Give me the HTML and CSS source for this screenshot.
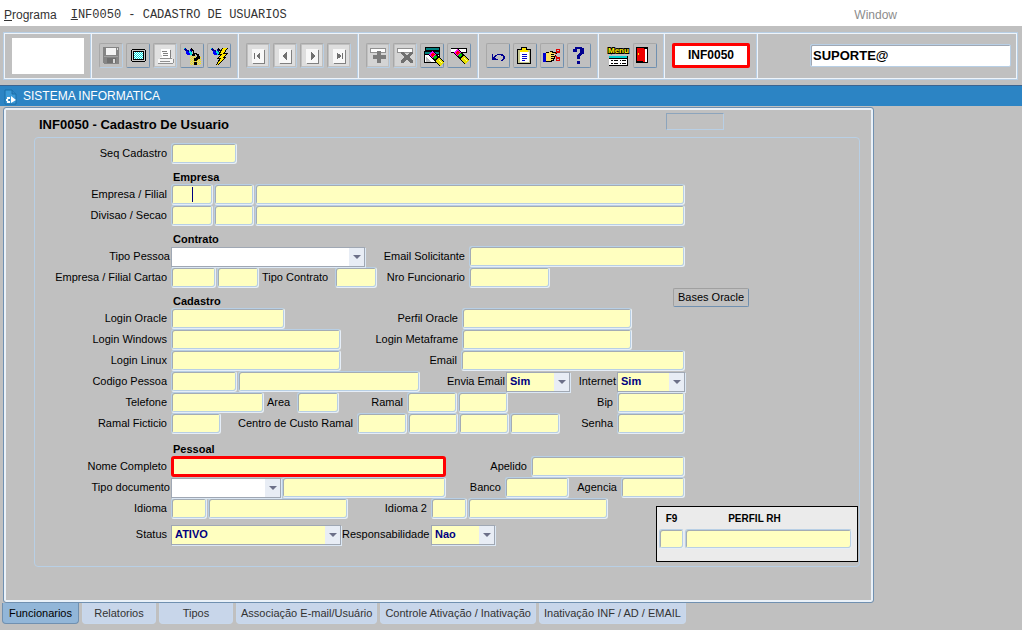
FILE: index.html
```html
<!DOCTYPE html>
<html lang="pt-BR">
<head>
<meta charset="utf-8">
<title>INF0050 - Cadastro de Usuarios</title>
<link rel="stylesheet" href="styles.css">
</head>
<body>
<svg class="defs" aria-hidden="true">
  <defs>
    <pattern id="dither" width="2" height="2" patternUnits="userSpaceOnUse"><rect width="2" height="2" fill="#fff"/><rect width="1" height="1" fill="#00e0e0"/><rect x="1" y="1" width="1" height="1" fill="#00e0e0"/></pattern>
    <pattern id="sand" width="2" height="2" patternUnits="userSpaceOnUse"><rect width="1" height="1" fill="#ffe600"/><rect x="1" y="1" width="1" height="1" fill="#ffe600"/></pattern>
    <g id="torch">
      <path d="M2 3h2v1h1v1h2v1h1v-2h2v4h-1v2h-3v-1h-1v-1h-1v-2h-1v-1h-1z" fill="#000090"/>
      <path d="M4 6h2v1h2v3h-3v-1h-1z" fill="#0000ff"/>
      <path d="M7 6h2v1h1v3h-2v-2h-1z" fill="#00e0e0"/>
      <path d="M9 3h1v1h1v1h1v3h-1v-2h-1v-1h-1z" fill="#000"/>
      <path d="M2 3h1v1h-1z" fill="#00e0e0"/>
    </g>
    <g id="page">
      <rect width="20" height="21" fill="#dedede"/>
      <rect x="5" y="5" width="12" height="14" fill="#808080"/>
      <rect x="4" y="4" width="12" height="14" fill="#f8f8f8"/>
    </g>
    <g id="brush" fill="none">
      <path d="M7 6l11 11" stroke="#000" stroke-width="6"/>
      <path d="M7 6l4 4" stroke="#f0f" stroke-width="5"/>
      <path d="M8 7l2 2" stroke="#f00" stroke-width="3"/>
      <path d="M10.500 9.500l2 2" stroke="#00c800" stroke-width="4"/>
      <path d="M13.500 12.500l5 5" stroke="#e8e000" stroke-width="5"/>
      <path d="M15 13l3 3" stroke="#ffff90" stroke-width="1"/>
    </g>
  </defs>
</svg>

<nav class="menubar">
  <button class="menu-item" type="button"><u>P</u>rograma</button>
  <button class="menu-item mono" type="button"><u>I</u>NF0050 - CADASTRO DE USUARIOS</button>
  <button class="menu-item window" type="button" disabled>Window</button>
</nav>

<header class="toolbar">
  <div class="group"><div class="logo"></div></div>
  <div class="group">
    <button class="tool off" type="button" aria-label="Salvar"><svg viewBox="0 0 20 21"><path d="M2 2h16v17h-15v-1h-1z" fill="#858585"/><path d="M5 3h10v7h-10z" fill="#f4f4f4"/><path d="M16 3h1v2h-1z" fill="#ddd"/><path d="M6 13h9v5h-9z" fill="#707070"/><path d="M12 14h2v4h-2z" fill="#d8d8d8"/><path d="M3 11h14v1h-14z" fill="#a0a0a0"/></svg></button>
    <button class="tool" type="button" aria-label="Tela"><svg viewBox="0 0 20 21"><path d="M4 4h13v1h1v11h-1v1h-13v-1h-1v-11h1z" fill="#000"/><path d="M4 5h13v11h-13z" fill="#c8c8c8"/><path d="M5 6h11v9h-11z" fill="#000"/><path d="M6 7h9v7h-9z" fill="url(#dither)"/></svg></button>
    <button class="tool off" type="button" aria-label="Imprimir"><svg viewBox="0 0 20 21"><path d="M0 0h20v21h-20z" fill="#e0e0e0"/><path d="M6 4h9v9h-8v-3h-1z" fill="#fff"/><path d="M15 5h1v8h-1zM7 6h5v1h-5zM8 8h5v1h-5zM8 10h5v1h-5z" fill="#808080"/><path d="M5 12h2v1h9v-1h1v2h1v4h-15v-4h2z" fill="#f6f6f6"/><path d="M5 13h12v1h-12zM3 18h15v1h-15zM18 14h1v4h-1zM5 16h10v1h-10z" fill="#909090"/></svg></button>
    <button class="tool" type="button" aria-label="Entrar consulta"><svg viewBox="0 0 20 21"><path d="M8 11h11v9h-11z" fill="url(#sand)"/><use href="#torch"/><path d="M11 8h4v1h2v2h1v3h-2v1h-1v1h-3v-3h2v-1h1v-2h-1v-1h-1v2h-3v-2h1zM12 17h3v3h-3z" fill="#000"/></svg></button>
    <button class="tool" type="button" aria-label="Executar consulta"><svg viewBox="0 0 20 21"><use href="#torch"/><path d="M13 3h6l-3 5h3l-4 4h2l-8 8h-2l3-6h-3l4-4h-2z" fill="#000"/><path d="M14 3h4l-4 6h4l-5 4h3l-8 7l4-7h-3l4-4h-2z" fill="#ffe600"/></svg></button>
  </div>
  <div class="group">
    <button class="tool off" type="button" aria-label="Primeiro"><svg viewBox="0 0 20 21"><use href="#page"/><path d="M6 8h1v6h-1zM12 8v6h-1v-1h-1v-1h-1v-2h1v-1h1v-1z" fill="#707070"/></svg></button>
    <button class="tool off" type="button" aria-label="Anterior"><svg viewBox="0 0 20 21"><use href="#page"/><path d="M12 7v8h-1v-1h-1v-1h-1v-1h-1v-2h1v-1h1v-1h1v-1z" fill="#707070"/></svg></button>
    <button class="tool off" type="button" aria-label="Proximo"><svg viewBox="0 0 20 21"><use href="#page"/><path d="M9 7v8h1v-1h1v-1h1v-1h1v-2h-1v-1h-1v-1h-1v-1z" fill="#707070"/></svg></button>
    <button class="tool off" type="button" aria-label="Ultimo"><svg viewBox="0 0 20 21"><use href="#page"/><path d="M13 8h1v6h-1zM8 8v6h1v-1h2v-1h1v-2h-1v-1h-2v-1z" fill="#707070"/></svg></button>
  </div>
  <div class="group">
    <button class="tool off" type="button" aria-label="Inserir"><svg viewBox="0 0 20 21"><path d="M0 0h20v21h-20z" fill="#d4d4d4"/><path d="M2 3h16v5h-16z" fill="#909090"/><path d="M3 4h14v3h-14z" fill="#fff"/><path d="M9 6h4v4h5v4h-5v4h-4v-4h-4v-4h4z" fill="#7c7c7c"/></svg></button>
    <button class="tool off" type="button" aria-label="Remover"><svg viewBox="0 0 20 21"><path d="M0 0h20v21h-20z" fill="#d4d4d4"/><path d="M2 3h16v5h-16z" fill="#909090"/><path d="M3 4h14v3h-14z" fill="#fff"/><path d="M6 7h3v1h1v1h1v1h2v-1h1v-1h1v-1h3v2h-1v1h-1v1h-1v2h1v1h1v1h1v3h-3v-1h-1v-1h-1v-1h-2v1h-1v1h-1v1h-3v-3h1v-1h1v-1h1v-2h-1v-1h-1v-1h-1z" fill="#707070"/></svg></button>
    <button class="tool" type="button" aria-label="Limpar bloco"><svg viewBox="0 0 20 21"><path d="M3 2h15v4h-15zM2 6h16v12h-16z" fill="#000"/><path d="M4 3h13v2h-13zM3 7h14v2h-14z" fill="#008080"/><path d="M3 10h14v7h-14z" fill="#fff"/><path d="M4 12l6 5h-6z" fill="#c0c0c0"/><use href="#brush" transform="translate(2 2)"/></svg></button>
    <button class="tool" type="button" aria-label="Limpar registro"><svg viewBox="0 0 20 21"><path d="M2 3h16v5h-16z" fill="#000"/><path d="M2 4h15v3h-15z" fill="#fff"/><use href="#brush"/></svg></button>
  </div>
  <div class="group">
    <button class="tool" type="button" aria-label="Desfazer"><svg viewBox="0 0 20 21"><path d="M4 9v6h6v-1h-2v-1h-1v-1h1v-1h1v-1h4v1h2v3h-1v1h-1v1h2v-1h1v-1h1v-3h-1v-1h-1v-1h-6v1h-2v1h-1v1h-1v-3z" fill="#000090"/></svg></button>
    <button class="tool" type="button" aria-label="Lista"><svg viewBox="0 0 20 21"><path d="M2 4h4v-2h6v2h4v15h-14z" fill="#000"/><path d="M3 5h12v13h-12z" fill="#c8c890"/><path d="M5 7h9v10h-9z" fill="#fff"/><path d="M7 3h4v2h2v2h-8v-2h2z" fill="#ffe600"/><path d="M7 9h5v1h-5zM7 11h5v1h-5zM7 13h5v1h-5zM7 15h3v1h-3z" fill="#0000d0"/></svg></button>
    <button class="tool" type="button" aria-label="Editar"><svg viewBox="0 0 20 21"><path d="M1 8h3v9h-3z" fill="#0000d0"/><path d="M4 7h4v-1h3v1h4v2h-3v1h2v2h-1v2h-1v2h-2v1h-6z" fill="#000"/><path d="M4 8h3v-1h3v1h4v1h-5v1h4v1h-4v1h3v1h-3v1h2v1h-2v1h-5z" fill="#ffe060"/><path d="M13 9l4-3M13 11l4 3" stroke="#e00000"/><circle cx="16" cy="6" r="2" fill="none" stroke="#e00000"/><circle cx="16" cy="14" r="2" fill="none" stroke="#e00000"/></svg></button>
    <button class="tool" type="button" aria-label="Ajuda"><svg viewBox="0 0 20 21"><path d="M6 2h7v1h2v6h-2v1h-1v1h-1v3h-3v-4h1v-1h1v-1h1v-4h-3v3h-4v-3h2zM8 16h3v3h-3z" fill="#000090"/></svg></button>
  </div>
  <div class="group">
    <button class="tool bare" type="button" aria-label="Menu"><svg viewBox="0 0 20 21"><text class="menu-glyph" x="0" y="8">Menu</text><path d="M1 11h19v10h-19z" fill="#000"/><path d="M1 11h18v2h-18z" fill="#00d0d0"/><path d="M1 14h18v6h-18z" fill="#fff"/><path d="M3 15h2v1h-2zM6 15h4v1h-4zM12 15h1v1h-1zM14 15h4v1h-4zM3 18h2v1h-2zM6 18h4v1h-4zM12 18h1v1h-1zM14 18h4v1h-4z" fill="#000"/></svg></button>
    <button class="tool" type="button" aria-label="Sair"><svg viewBox="0 0 20 21"><path d="M1 2h12v16h-12z" fill="#000"/><path d="M9 4h3v13h-3z" fill="#fff"/><path d="M2 3h7v1h1v13h-2v-1h-6z" fill="#f00000"/><path d="M3 8h1v2h-1z" fill="#ffe600"/></svg></button>
  </div>
  <div class="group"><output class="program-code">INF0050</output></div>
  <div class="group grow"><input class="user-box" type="text" value="SUPORTE@" aria-label="Usuario"></div>
</header>

<div class="titlebar">
  <svg class="app-icon" viewBox="0 0 13 16"><path d="M1 1h7l4 4v10h-11z" fill="#3c9ad8" stroke="#1b6ea8"/><path d="M8 1v4h4" fill="#2c84c4" stroke="#1b6ea8"/><path d="M2 10h1v-2h3v2h-1v2h1v2h-3v-2h-1zM7 7l5 4l-5 3z" fill="#fff"/><circle cx="5" cy="11" r="1" fill="#1b6ea8"/></svg>
  <span>SISTEMA INFORMATICA</span>
</div>

<main class="canvas">
  <div class="canvas-head">
    <h1>INF0050 - Cadastro De Usuario</h1>
    <input class="status-box" type="text" readonly aria-label="Situacao">
  </div>

  <form class="frame">
    <div class="row"><label class="lead" for="seq">Seq Cadastro</label><input id="seq" class="field w66"></div>

    <div class="head"><h2>Empresa</h2></div>
    <div class="row"><label class="lead" for="emp">Empresa / Filial</label><input id="emp" class="field w42 caret"><input class="field w40" aria-label="Filial"><input class="field fill" aria-label="Nome da filial"></div>
    <div class="row"><label class="lead" for="div">Divisao / Secao</label><input id="div" class="field w42"><input class="field w40" aria-label="Secao"><input class="field fill" aria-label="Nome da secao"></div>

    <div class="head"><h2>Contrato</h2></div>
    <div class="row"><label class="lead tight" for="tpes">Tipo Pessoa</label><span class="combo white w194"><select id="tpes"><option></option></select><svg viewBox="0 0 8 4"><path d="M0 0h8l-4 4z"/></svg></span><label class="fill" for="esol">Email Solicitante</label><input id="esol" class="field w216"></div>
    <div class="row to-funcionario"><label class="lead" for="ecar">Empresa / Filial Cartao</label><input id="ecar" class="field w45"><input class="field w42" aria-label="Filial Cartao"><label class="start contrato" for="tcon">Tipo Contrato</label><input id="tcon" class="field w42"><label class="fill" for="nfun">Nro Funcionario</label><input id="nfun" class="field w81"></div>

    <div class="head bases"><h2>Cadastro</h2><button class="action" type="button">Bases Oracle</button></div>
    <div class="row to-oracle"><label class="lead" for="lora">Login Oracle</label><input id="lora" class="field w114"><label class="fill" for="pora">Perfil Oracle</label><input id="pora" class="field w170"></div>
    <div class="row to-oracle"><label class="lead" for="lwin">Login Windows</label><input id="lwin" class="field w170"><label class="fill" for="lmet">Login Metaframe</label><input id="lmet" class="field w170"></div>
    <div class="row"><label class="lead" for="llin">Login Linux</label><input id="llin" class="field w170"><label class="fill" for="mail">Email</label><input id="mail" class="field w224"></div>
    <div class="row"><label class="lead" for="cpes">Codigo Pessoa</label><input id="cpes" class="field w66"><input class="field w182" aria-label="Nome da pessoa"><label class="fill tight" for="emai">Envia Email</label><span class="combo w64"><select id="emai"><option>Sim</option><option>Nao</option></select><svg viewBox="0 0 8 4"><path d="M0 0h8l-4 4z"/></svg></span><label class="internet tight" for="inet">Internet</label><span class="combo w68"><select id="inet"><option>Sim</option><option>Nao</option></select><svg viewBox="0 0 8 4"><path d="M0 0h8l-4 4z"/></svg></span></div>
    <div class="row"><label class="lead" for="tel">Telefone</label><input id="tel" class="field w93"><label class="start area" for="area">Area</label><input id="area" class="field w42"><label class="ramal" for="ram">Ramal</label><input id="ram" class="field w50"><input class="field w50" aria-label="Ramal 2"><label class="fill" for="bip">Bip</label><input id="bip" class="field w68"></div>
    <div class="row"><label class="lead" for="rfic">Ramal Ficticio</label><input id="rfic" class="field w50"><label class="custo" for="ccus">Centro de Custo Ramal</label><input id="ccus" class="field w50"><input class="field w50" aria-label="Centro de Custo 2"><input class="field w50" aria-label="Centro de Custo 3"><input class="field w50" aria-label="Centro de Custo 4"><label class="fill" for="sen">Senha</label><input id="sen" class="field w68" type="password"></div>

    <div class="head pessoal"><h2>Pessoal</h2></div>
    <div class="row"><label class="lead" for="nome">Nome Completo</label><input id="nome" class="field required w275"><label class="fill" for="ape">Apelido</label><input id="ape" class="field w154"></div>
    <div class="row"><label class="lead tight" for="tdoc">Tipo documento</label><span class="combo white w110"><select id="tdoc"><option></option></select><svg viewBox="0 0 8 4"><path d="M0 0h8l-4 4z"/></svg></span><input class="field w164" aria-label="Documento"><label class="fill" for="ban">Banco</label><input id="ban" class="field w64"><label class="agencia" for="age">Agencia</label><input id="age" class="field w64"></div>

    <div class="split">
      <div class="split-main">
        <div class="row"><label class="lead" for="idi">Idioma</label><input id="idi" class="field w36"><input class="field w140" aria-label="Nome do idioma"><label class="fill" for="idi2">Idioma 2</label><input id="idi2" class="field w36"><input class="field w140" aria-label="Nome do idioma 2"></div>
        <div class="row last"><label class="lead" for="sta">Status</label><span class="combo w170"><select id="sta"><option>ATIVO</option><option>INATIVO</option></select><svg viewBox="0 0 8 4"><path d="M0 0h8l-4 4z"/></svg></span><label class="resp" for="res">Responsabilidade</label><span class="combo w64"><select id="res"><option>Nao</option><option>Sim</option></select><svg viewBox="0 0 8 4"><path d="M0 0h8l-4 4z"/></svg></span></div>
      </div>
      <div class="perfil">
        <label for="f9">F9</label><label class="perfil-title" for="prh">PERFIL RH</label>
        <input id="f9" class="field"><input id="prh" class="field">
      </div>
    </div>
  </form>
</main>

<nav class="tabs">
  <button class="tab active" type="button">Funcionarios</button>
  <button class="tab" type="button">Relatorios</button>
  <button class="tab" type="button">Tipos</button>
  <button class="tab" type="button">Associação E-mail/Usuário</button>
  <button class="tab" type="button">Controle Ativação / Inativação</button>
  <button class="tab" type="button">Inativação INF / AD / EMAIL</button>
</nav>
</body>
</html>
```
FILE: styles.css
```css
* { box-sizing: border-box; }

body {
  margin: 0;
  background: #c0c0c0;
  color: #000;
  font: 11px/13px "Liberation Sans", Arial, sans-serif;
}

button, input, select { font: inherit; color: inherit; margin: 0; }
h1, h2 { margin: 0; }
.defs { position: absolute; width: 0; height: 0; }

/* Menu bar */
.menubar {
  display: flex;
  align-items: center;
  gap: 14px;
  height: 26px;
  padding: 3px 4px 0;
  background: #fff;
}
.menu-item {
  padding: 0;
  border: 0;
  background: none;
  color: #333;
  font-size: 12px;
  line-height: 16px;
  white-space: nowrap;
}
.mono { font-family: "Liberation Mono", "Courier New", monospace; }
.window { margin-left: auto; margin-right: 121px; color: #8c8c8c; }

/* Toolbar */
.toolbar {
  display: flex;
  height: 48px;
  margin: 6px 4px 5px 3px;
  padding: 1px;
  border: 1px solid #b8cfe5;
  box-shadow: inset 0 0 0 1px #eef4fa;
}
.group {
  display: flex;
  align-items: center;
  gap: 3px;
  padding: 0 6px 1px 7px;
  border-right: 1px solid #b8cfe5;
  box-shadow: 1px 0 #eef4fa;
  margin-right: 1px;
}
.group.grow { flex: 1; padding: 0 5px 1px 52px; margin: 0; border: 0; box-shadow: none; }
.logo { width: 72px; height: 36px; background: #fff; }
.tool {
  display: grid;
  place-items: center;
  width: 24px;
  height: 25px;
  padding: 0;
  border: 1px solid #a8a8a8;
  border-right-color: #7090b0;
  border-bottom-color: #7090b0;
  border-radius: 2px;
  background: #c0c0c0;
}
.tool.off { border-right-color: #b8cfe5; border-bottom-color: #b8cfe5; }
.tool.bare { border-color: transparent; }
.tool svg { display: block; width: 20px; height: 21px; shape-rendering: crispEdges; overflow: visible; }
.menu-glyph {
  fill: #ffee00;
  stroke: #000;
  stroke-width: 2px;
  paint-order: stroke;
  font: bold 8px "Liberation Sans", Arial, sans-serif;
}
.program-code {
  width: 78px;
  height: 25px;
  border: 3px solid #f00;
  border-radius: 2px;
  background: #fff;
  font-size: 12px;
  font-weight: bold;
  line-height: 19px;
  text-align: center;
}
.user-box {
  width: 100%;
  height: 23px;
  padding: 0 2px;
  border: 1px solid #b8cfe5;
  border-radius: 2px;
  box-shadow: inset 1px 1px #a0a8b4;
  background: #fff;
  font-size: 13px;
  font-weight: bold;
}

/* Window title */
.titlebar {
  display: flex;
  align-items: center;
  gap: 6px;
  height: 21px;
  padding: 1px 4px 0;
  border-top: 1px solid #3c6490;
  background: #2c84c4;
  color: #fff;
  font-size: 12px;
}
.app-icon { width: 13px; height: 16px; }

/* Canvas */
.canvas {
  margin: 1px 148px 0 3px;
  padding: 4px 13px 35px 30px;
  border: 1px solid #7090b0;
  border-radius: 3px;
  box-shadow: inset 0 0 0 2px #eaf1f8;
}
.canvas-head {
  display: flex;
  align-items: flex-start;
  justify-content: space-between;
  height: 25px;
  padding: 1px 136px 0 5px;
}
h1 { font-size: 13px; line-height: 24px; }
.status-box {
  width: 58px;
  height: 17px;
  border: 1px solid #b8cfe5;
  border-top-color: #8ca4bc;
  border-left-color: #8ca4bc;
  background: #c0c0c0;
}

.frame {
  padding: 5px 1px 4px 0;
  border: 1px solid #b8cfe5;
  border-radius: 4px;
}
.row {
  display: flex;
  align-items: center;
  gap: 1px;
  height: 21px;
  max-width: 650px;
}
.row label { padding-right: 3px; text-align: right; white-space: nowrap; }
.row .lead { width: 135px; flex: none; }
.row .tight { padding-right: 0; }
.row .start { padding: 0 0 0 2px; text-align: left; }
.fill { flex: 1; min-width: 0; }
.contrato { width: 74px; }
.internet { width: 45px; }
.area { width: 31px; }
.ramal { width: 66px; }
.custo { width: 134px; }
.agencia { width: 50px; }
.resp { width: 88px; }
.to-oracle { max-width: 597px; }
.to-funcionario { max-width: 515px; }

.head {
  display: flex;
  align-items: flex-end;
  justify-content: space-between;
  height: 20px;
  padding-left: 138px;
}
.head.bases { max-width: 714px; align-items: flex-start; }
.head.bases h2 { align-self: flex-end; }
.head.pessoal { height: 22px; }
h2 { font-size: 11px; line-height: 13px; }

.field {
  height: 21px;
  padding: 0 3px;
  border: 1px solid #b8cfe5;
  border-right-color: #e6eef8;
  border-bottom-color: #e6eef8;
  border-radius: 3px;
  box-shadow: inset 1px 1px #a4acb4, inset -1px -1px #b8cfe5;
  background: #ffffc0;
}
.field.required { border: 3px solid #f00; box-shadow: none; }
.field.caret {
  background: linear-gradient(#000080, #000080) 50% 50% / 1px 15px no-repeat #ffffc0;
}

.combo { position: relative; display: block; height: 20px; background: #ffffc0; }
.combo.white { background: #fff; }
.combo select {
  display: block;
  width: 100%;
  height: 100%;
  padding: 0 20px 0 3px;
  border: 1px solid #a0a8b4;
  border-radius: 0;
  box-shadow: 1px 1px #dce8f5;
  background: linear-gradient(#e8edf5, #e8edf5) 100% 0 / 15px 100% no-repeat transparent;
  appearance: none;
  color: #000080;
  font-weight: bold;
}
.combo svg {
  position: absolute;
  right: 4px;
  top: 8px;
  width: 8px;
  height: 4px;
  fill: #6c7088;
  pointer-events: none;
}

.w36 { width: 36px; }
.w40 { width: 40px; }
.w42 { width: 42px; }
.w45 { width: 45px; }
.w50 { width: 50px; }
.w64 { width: 64px; }
.w66 { width: 66px; }
.w68 { width: 68px; }
.w81 { width: 81px; }
.w93 { width: 93px; }
.w110 { width: 110px; }
.w114 { width: 114px; }
.w140 { width: 140px; }
.w154 { width: 154px; }
.w164 { width: 164px; }
.w170 { width: 170px; }
.w182 { width: 182px; }
.w194 { width: 194px; }
.w216 { width: 216px; }
.w224 { width: 224px; }
.w275 { width: 275px; }

.action {
  height: 19px;
  padding: 0 4px;
  border: 1px solid #a0a0a0;
  border-right-color: #7090b0;
  border-bottom-color: #7090b0;
  border-radius: 2px;
  background: #c0c0c0;
}

.split { display: flex; justify-content: space-between; }
.split-main { flex: 1; max-width: 573px; }
.row.last { margin-top: 5px; }
.perfil {
  display: grid;
  grid-template-columns: 25px 1fr;
  gap: 3px 1px;
  align-content: start;
  width: 202px;
  height: 56px;
  margin-top: 8px;
  padding: 5px 5px 0 2px;
  border: 1px solid #000;
  background: #ebebeb;
}
.perfil label { text-align: center; font-weight: bold; font-size: 10px; line-height: 14px; }
.perfil .perfil-title { padding-right: 28px; }
.perfil .field { width: 100%; height: 20px; min-width: 0; }

/* Page tabs */
.tabs { display: flex; gap: 3px; padding-left: 2px; }
.tab {
  min-width: 74px;
  height: 21px;
  padding: 0 4px;
  border: 1px solid #c8d8ec;
  border-top: 0;
  border-radius: 0 0 4px 4px;
  background: #c8d6ea;
  color: #333;
  white-space: nowrap;
}
.tab.active { padding: 0 6px; background: #92b6d8; border-color: #7090b0; color: #000; }
```
